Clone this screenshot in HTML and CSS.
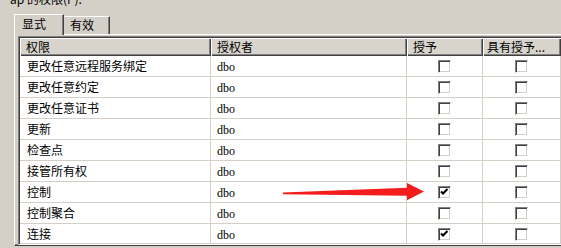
FILE: index.html
```html
<!DOCTYPE html>
<html lang="zh-CN">
<head>
<meta charset="utf-8">
<title>权限</title>
<link rel="stylesheet" href="styles.css">
</head>
<body>
<div class="label">ap 的权限(P):</div>
<div class="tabs">
  <div class="tab active">显式</div>
  <div class="tab">有效</div>
</div>
<div class="panel">
  <div class="grid">
    <div class="row head">
      <div class="hc">权限</div>
      <div class="hc">授权者</div>
      <div class="hc">授予</div>
      <div class="hc">具有授予...</div>
      <div class="hc"></div>
    </div>
    <div class="row"><div class="c">更改任意远程服务绑定</div><div class="c mono">dbo</div><div class="c chk"><span class="cb"></span></div><div class="c chk"><span class="cb"></span></div><div class="c"></div></div>
    <div class="row"><div class="c">更改任意约定</div><div class="c mono">dbo</div><div class="c chk"><span class="cb"></span></div><div class="c chk"><span class="cb"></span></div><div class="c"></div></div>
    <div class="row"><div class="c">更改任意证书</div><div class="c mono">dbo</div><div class="c chk"><span class="cb"></span></div><div class="c chk"><span class="cb"></span></div><div class="c"></div></div>
    <div class="row"><div class="c">更新</div><div class="c mono">dbo</div><div class="c chk"><span class="cb"></span></div><div class="c chk"><span class="cb"></span></div><div class="c"></div></div>
    <div class="row"><div class="c">检查点</div><div class="c mono">dbo</div><div class="c chk"><span class="cb"></span></div><div class="c chk"><span class="cb"></span></div><div class="c"></div></div>
    <div class="row"><div class="c">接管所有权</div><div class="c mono">dbo</div><div class="c chk"><span class="cb"></span></div><div class="c chk"><span class="cb"></span></div><div class="c"></div></div>
    <div class="row"><div class="c">控制</div><div class="c mono">dbo</div><div class="c chk"><span class="cb"><svg viewBox="0 0 9 9" width="9" height="9"><path d="M1 3.5 L3 5.5 L7.5 1" fill="none" stroke="#000" stroke-width="2"/></svg></span></div><div class="c chk"><span class="cb"></span></div><div class="c"></div></div>
    <div class="row"><div class="c">控制聚合</div><div class="c mono">dbo</div><div class="c chk"><span class="cb"></span></div><div class="c chk"><span class="cb"></span></div><div class="c"></div></div>
    <div class="row"><div class="c">连接</div><div class="c mono">dbo</div><div class="c chk"><span class="cb"><svg viewBox="0 0 9 9" width="9" height="9"><path d="M1 3.5 L3 5.5 L7.5 1" fill="none" stroke="#000" stroke-width="2"/></svg></span></div><div class="c chk"><span class="cb"></span></div><div class="c"></div></div>
  </div>
</div>
<svg class="arrow" width="561" height="248" viewBox="0 0 561 248">
  <polygon points="283,192.6 407,187.8 407,183 424,191.6 407,200.2 407,195.8 283,194.2" fill="#f41c1c"/>
</svg>
</body>
</html>
```
FILE: styles.css
```css
html, body {
  margin: 0;
  padding: 0;
}
body {
  width: 561px;
  height: 248px;
  overflow: hidden;
  background: #d4d0c8;
  font-family: "Noto Sans CJK SC", "Liberation Sans", sans-serif;
  font-size: 12px;
  color: #000;
  position: relative;
}
.label {
  margin-top: -7px;
  padding-left: 10px;
  height: 12px;
  line-height: 12px;
  white-space: nowrap;
}
.tabs {
  display: flex;
  align-items: flex-end;
  margin-top: 9px;
  margin-left: 14px;
  height: 20px;
}
.tab {
  box-sizing: border-box;
  height: 18px;
  width: 46px;
  padding-left: 6px;
  line-height: 16px;
  border-top: 1px solid #fff;
  border-right: 1px solid #404040;
  box-shadow: inset -1px 0 0 #808080;
  background: #d4d0c8;
}
.tab.active {
  position: relative;
  width: 50px;
  height: 21px;
  margin-bottom: -1px;
  padding-left: 7px;
  line-height: 18px;
  border-left: 1px solid #fff;
  z-index: 1;
}
.panel {
  margin-left: 14px;
  border-left: 1px solid #fff;
  border-top: 1px solid #fff;
  border-bottom: 1px solid #404040;
  box-shadow: inset 0 -1px 0 #808080;
  padding: 1px 0 1px 3px;
  height: 212px;
  box-sizing: border-box;
}
.grid {
  box-sizing: border-box;
  height: 209px;
  overflow: hidden;
  border-top: 1px solid #808080;
  border-left: 1px solid #808080;
  border-bottom: 1px solid #fff;
  box-shadow: inset 1px 1px 0 #404040, inset 0 -1px 0 #d4d0c8;
  padding: 1px 0 0 1px;
  background: #fff;
}
.row {
  display: grid;
  grid-template-columns: 191px 196px 76px 78px 40px;
  height: 21px;
}
.row.head {
  height: 18px;
}
.hc {
  box-sizing: border-box;
  height: 18px;
  padding-left: 6px;
  line-height: 17px;
  white-space: nowrap;
  overflow: hidden;
  background-color: #d4d0c8;
  background-image: repeating-conic-gradient(#dcd9d2 0 25%, #d4d0c8 0 50%);
  background-size: 2px 2px;
  box-shadow: inset 1px 1px 0 #fff, inset -1px -1px 0 #404040, inset -2px -2px 0 #808080;
}
.hc:nth-child(4) {
  padding-left: 4px;
}
.c {
  box-sizing: border-box;
  height: 21px;
  padding-left: 7px;
  line-height: 20px;
  border-right: 1px solid #d4d0c8;
  border-bottom: 1px solid #d4d0c8;
  white-space: nowrap;
  overflow: hidden;
}
.c.mono {
  padding-left: 6px;
  padding-top: 2px;
  font-family: "Liberation Serif", "Times New Roman", serif;
  font-size: 12px;
  line-height: 18px;
}
.c.chk {
  display: flex;
  align-items: center;
  justify-content: center;
  padding-left: 0;
  padding-top: 1px;
}
.cb {
  box-sizing: border-box;
  width: 13px;
  height: 13px;
  background: #fff;
  border-top: 1px solid #808080;
  border-left: 1px solid #808080;
  border-right: 1px solid #fff;
  border-bottom: 1px solid #fff;
  box-shadow: inset 1px 1px 0 #404040, inset -1px -1px 0 #d4d0c8;
  display: flex;
  align-items: center;
  justify-content: center;
}
.cb svg {
  display: block;
}
.arrow {
  position: absolute;
  left: 0;
  top: 0;
  pointer-events: none;
}
```
